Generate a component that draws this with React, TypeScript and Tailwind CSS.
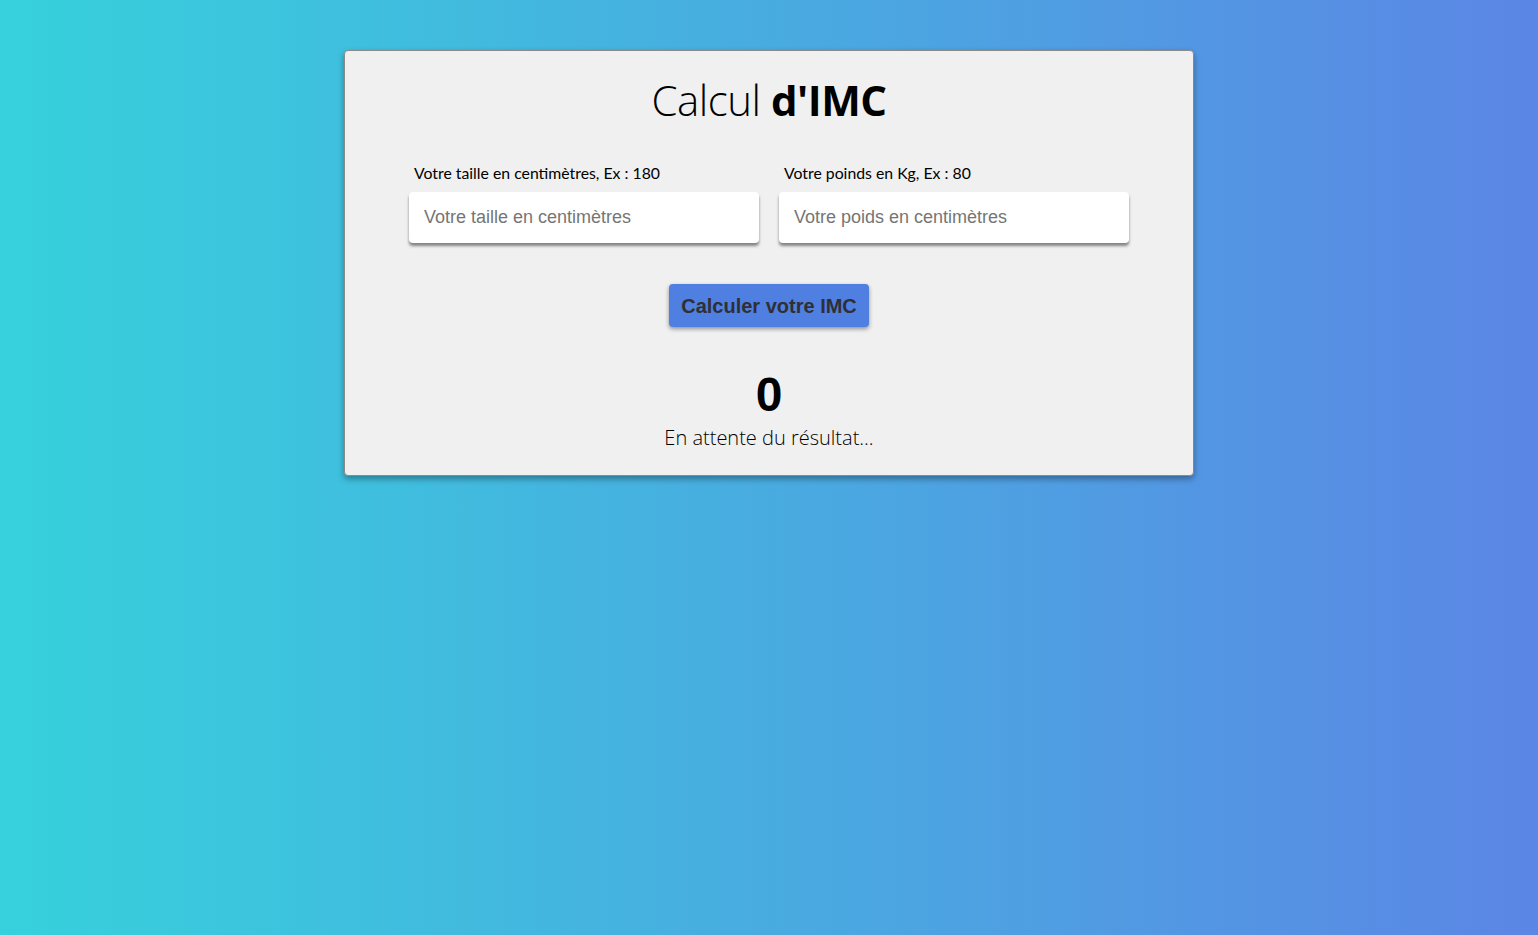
import React from "react";

export default function App() {
  return (
    <div className="min-h-[935px] w-full bg-[linear-gradient(to_right,#36d1dc,#5b86e5)] pt-[50px]">
      <div className="mx-auto w-[850px] h-[426px] bg-[#f0f0f0] border border-[#8a8a8a] rounded-[4px] shadow-[0_3px_6px_rgba(0,0,0,0.35)] flex flex-col items-center">
        <h1 className="mt-[23px] text-[42px] leading-[52px] text-black font-['Open_Sans',sans-serif] font-light tracking-[-0.5px]">
          Calcul <span className="font-bold">d'IMC</span>
        </h1>
        <div className="mt-[37px] flex gap-[20px]">
          <div className="flex flex-col w-[350px]">
            <label className="pl-[5px] text-[15.8px] leading-[20px] text-black font-['Lato',sans-serif]">
              Votre taille en centimètres, Ex : 180
            </label>
            <input
              className="mt-[9px] h-[51px] w-[350px] rounded-[4px] bg-white pl-[15px] text-[18px] font-['Liberation_Sans',Arial,sans-serif] placeholder:text-[#757575] outline-none shadow-[0_3px_3px_rgba(0,0,0,0.45)]"
              placeholder="Votre taille en centimètres"
            />
          </div>
          <div className="flex flex-col w-[350px]">
            <label className="pl-[5px] text-[15.8px] leading-[20px] text-black font-['Lato',sans-serif]">
              Votre poinds en Kg, Ex : 80
            </label>
            <input
              className="mt-[9px] h-[51px] w-[350px] rounded-[4px] bg-white pl-[15px] text-[18px] font-['Liberation_Sans',Arial,sans-serif] placeholder:text-[#757575] outline-none shadow-[0_3px_3px_rgba(0,0,0,0.45)]"
              placeholder="Votre poids en centimètres"
            />
          </div>
        </div>
        <button className="mt-[41px] h-[43px] w-[200px] rounded-[4px] bg-[#4f7fe0] text-[#2f2f35] text-[20px] font-bold font-['Liberation_Sans',Arial,sans-serif] shadow-[0_2px_4px_rgba(0,0,0,0.4)]">
          Calculer votre IMC
        </button>
        <div className="mt-[40px] text-[48px] leading-[56px] font-bold text-black font-['Liberation_Sans',Arial,sans-serif]">
          0
        </div>
        <p className="mt-[2px] text-[20px] leading-[26px] text-black font-['Open_Sans',sans-serif] font-light">
          En attente du résultat...
        </p>
      </div>
    </div>
  );
}
